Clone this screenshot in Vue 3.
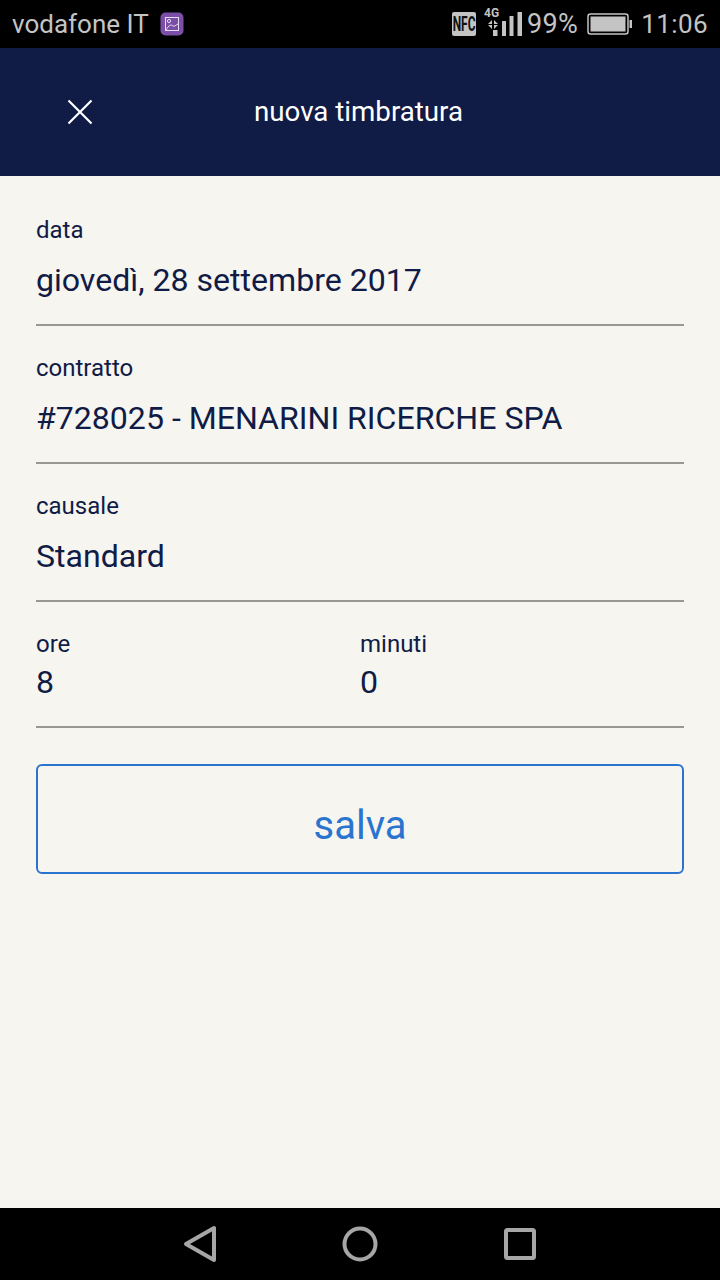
<script setup>
const fields = [
  { label: 'data', value: 'giovedì, 28 settembre 2017' },
  { label: 'contratto', value: '#728025 - MENARINI RICERCHE SPA' },
  { label: 'causale', value: 'Standard' },
]
</script>

<template>
<div class="screen">
  <div class="statusbar">
    <div class="status-left">
      <span class="carrier">vodafone IT</span>
      <svg class="pic" width="24" height="24" viewBox="0 0 24 24">
        <rect width="23" height="23" x="0.5" y="0.5" rx="5" fill="#7b4fa8"/>
        <rect x="5.5" y="5.5" width="13" height="13" fill="none" stroke="#e6def0" stroke-width="1"/>
        <circle cx="9" cy="9" r="1.6" fill="none" stroke="#e6def0"/>
        <path d="M6 18 C9 13 11 12 13 14 C14 15 16 13 18 12" fill="none" stroke="#e6def0"/>
      </svg>
    </div>
    <div class="status-right">
      <span class="nfc"><span class="nfc-text">NFC</span></span>
      <svg class="signal" width="40" height="34" viewBox="0 0 40 34">
        <text x="0" y="10" class="tiny">4G</text>
        <path d="M8 13 L4 17 H8 Z M10 13 V17 H14 Z M4 18 L8 22 V18 Z M10 18 V22 L14 18 Z" fill="#c4c4c4"/>
        <rect x="9" y="23" width="4.5" height="6" fill="#c4c4c4"/>
        <rect x="18" y="14" width="4" height="15" fill="#c4c4c4"/>
        <rect x="25.5" y="9" width="4" height="20" fill="#c4c4c4"/>
        <rect x="33.5" y="5" width="4.5" height="24" fill="#c4c4c4"/>
      </svg>
      <span class="pct">99%</span>
      <svg class="battery" width="46" height="22" viewBox="0 0 46 22">
        <rect x="1" y="1" width="40" height="20" rx="2.5" fill="none" stroke="#c4c4c4" stroke-width="1.5"/>
        <rect x="3.5" y="3.5" width="35" height="15" fill="#c4c4c4"/>
        <rect x="42.5" y="7" width="2.5" height="8" fill="#c4c4c4"/>
      </svg>
      <span class="clock">11:06</span>
    </div>
  </div>

  <div class="topbar">
    <svg class="close" width="26" height="26" viewBox="0 0 26 26">
      <path d="M1.5 1.5 L24.5 24.5 M24.5 1.5 L1.5 24.5" stroke="#fff" stroke-width="2.2" fill="none"/>
    </svg>
    <div class="title">nuova timbratura</div>
  </div>

  <div class="content">
    <div v-for="f in fields" :key="f.label" class="field">
      <div class="label">{{ f.label }}</div>
      <div class="value">{{ f.value }}</div>
    </div>

    <div class="field-row">
      <div class="half">
        <div class="label">ore</div>
        <div class="value small">8</div>
      </div>
      <div class="half">
        <div class="label">minuti</div>
        <div class="value small">0</div>
      </div>
    </div>

    <button class="save">salva</button>
  </div>

  <div class="navbar">
    <svg width="40" height="40" viewBox="0 0 40 40">
      <path d="M34 4 V36 L6 20 Z" fill="none" stroke="#a6a6a6" stroke-width="4" stroke-linejoin="round"/>
    </svg>
    <svg width="40" height="40" viewBox="0 0 40 40">
      <circle cx="20" cy="20" r="15.5" fill="none" stroke="#a6a6a6" stroke-width="4"/>
    </svg>
    <svg width="40" height="40" viewBox="0 0 40 40">
      <rect x="6" y="6" width="28" height="28" rx="1.5" fill="none" stroke="#a6a6a6" stroke-width="4"/>
    </svg>
  </div>
</div>
</template>

<style>
html, body { margin: 0; background: #f6f5f0; }
</style>

<style scoped>
.screen {
  width: 720px;
  height: 1280px;
  display: flex;
  flex-direction: column;
  background: #f6f5f0;
  font-family: Roboto, "Liberation Sans", sans-serif;
  overflow: hidden;
}

.statusbar {
  height: 48px;
  background: #000;
  color: #c4c4c4;
  display: flex;
  align-items: center;
  justify-content: space-between;
  padding: 0 12px;
  font-size: 26px;
  box-sizing: border-box;
  flex-shrink: 0;
}
.status-left, .status-right {
  display: flex;
  align-items: center;
}
.pic { margin-left: 11px; }
.nfc {
  background: #c4c4c4;
  color: #111;
  width: 24px;
  height: 24px;
  display: flex;
  align-items: center;
  justify-content: center;
  border-radius: 2px;
  overflow: hidden;
}
.nfc-text {
  display: block;
  font-size: 20px;
  font-weight: 700;
  line-height: 24px;
  transform: scaleX(0.6);
  flex-shrink: 0;
}
.tiny { font-size: 12px; font-weight: 700; fill: #c4c4c4; }
.signal { margin-left: 8px; }
.pct { margin-left: 3px; font-size: 27px; letter-spacing: 0.4px; }
.battery { margin-left: 9px; }
.clock { margin-left: 8px; letter-spacing: 0.4px; }

.topbar {
  height: 128px;
  background: #101b46;
  display: flex;
  align-items: center;
  flex-shrink: 0;
}
.close { margin-left: 67px; }
.title {
  color: #fff;
  font-size: 27.7px;
  margin-left: 161px;
  margin-bottom: 2px;
}

.content {
  flex: 1;
  padding: 12px 36px 0;
}
.field {
  height: 138px;
  box-sizing: border-box;
  border-bottom: 2px solid #989792;
  padding-top: 26px;
}
.label {
  color: #101b46;
  font-size: 24px;
  line-height: 32px;
}
.value {
  color: #101b46;
  font-size: 32.1px;
  line-height: 38px;
  margin-top: 15px;
}
.value.small { margin-top: 3px; }
.field-row {
  display: flex;
  height: 126px;
  box-sizing: border-box;
  border-bottom: 2px solid #989792;
  padding-top: 26px;
}
.half { width: 50%; }

.save {
  display: block;
  width: 100%;
  height: 110px;
  margin-top: 36px;
  background: transparent;
  border: 2px solid #2a74d0;
  border-radius: 6px;
  color: #2a74d0;
  font-family: inherit;
  font-size: 40px;
  padding: 12px 0 0;
}

.navbar {
  height: 72px;
  background: #000;
  flex-shrink: 0;
  display: flex;
  align-items: center;
  justify-content: center;
  gap: 120px;
}
</style>
